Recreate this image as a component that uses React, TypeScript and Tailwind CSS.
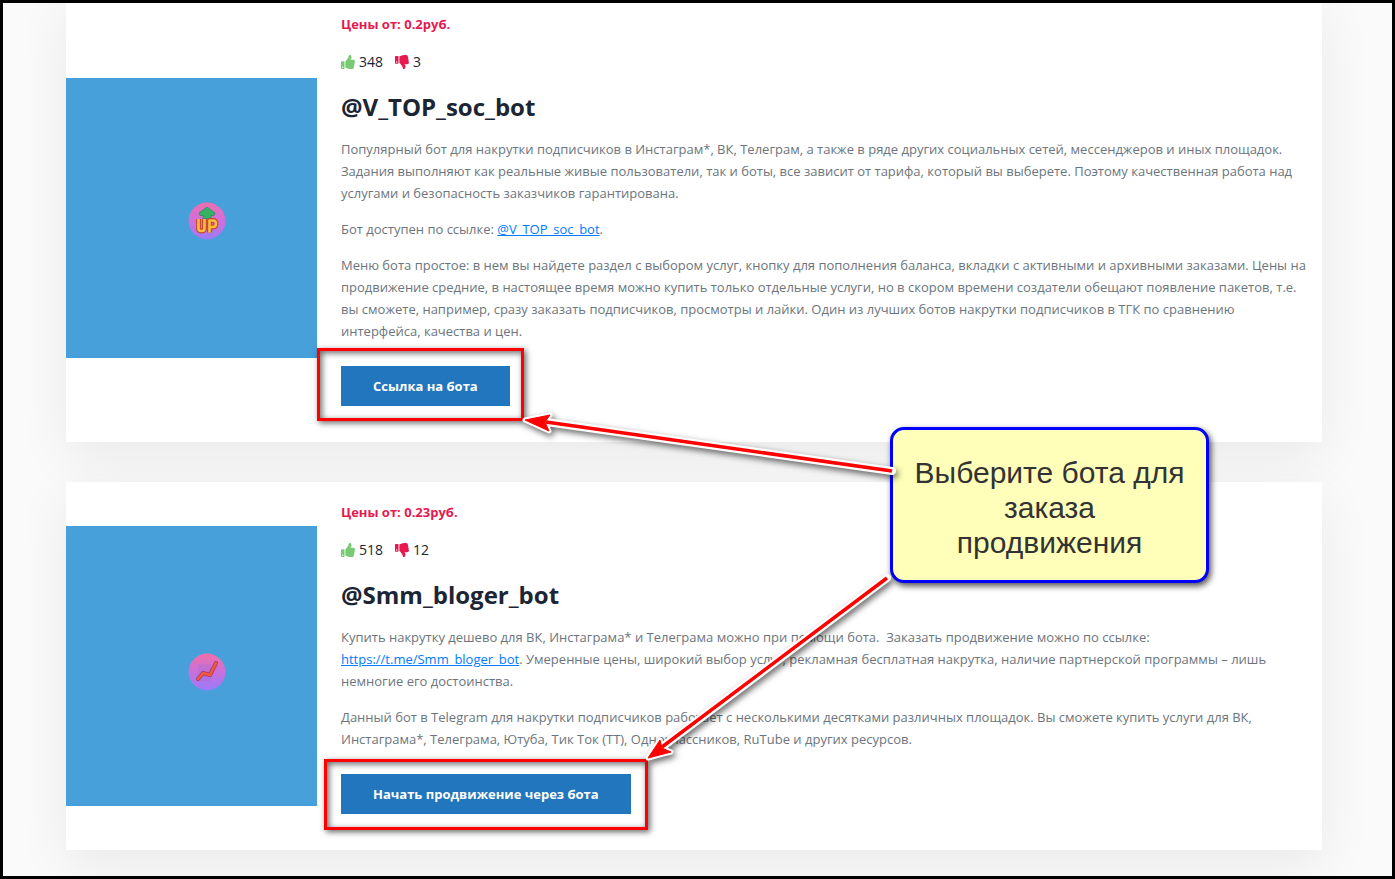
import React from "react";
import { FaThumbsDown, FaThumbsUp } from "react-icons/fa";

interface BotCardProps {
  price: string;
  likes: number;
  dislikes: number;
  name: string;
  action: string;
  logo: React.ReactNode;
  children: React.ReactNode;
}

const UpLogo = () => (
  <svg viewBox="0 0 38 38" className="mt-[6px] ml-[31px] size-[38px]" aria-hidden="true">
    <defs>
      <linearGradient id="up-bg" x1="0" y1="0" x2="0" y2="1">
        <stop offset="0" stopColor="#ee6fae" />
        <stop offset="0.5" stopColor="#cf6fdc" />
        <stop offset="1" stopColor="#9b7cf6" />
      </linearGradient>
    </defs>
    <circle cx="19" cy="19" r="18.5" fill="url(#up-bg)" />
    <path d="M19 5l8 6-1 2.500h-3v3h-8v-3h-3l-1-2.500z" fill="#36b260" stroke="#2a8a6a" strokeWidth="0.800" />
    <g fill="none" strokeLinejoin="round">
      <path d="M10.500 17v10q0 2 3 2t3-2v-10M21.500 30.500v-12h3.500q3 0 3 3.200t-3 3.300h-3" stroke="#c8452c" strokeWidth="4.800" />
      <path d="M10.500 17v10q0 2 3 2t3-2v-10M21.500 30.500v-12h3.500q3 0 3 3.200t-3 3.300h-3" stroke="#f9bd3f" strokeWidth="2.600" />
    </g>
  </svg>
);

const GrowthLogo = () => (
  <svg viewBox="0 0 38 38" className="mt-3 ml-[31px] size-[38px]" aria-hidden="true">
    <defs>
      <linearGradient id="growth-bg" x1="0" y1="0" x2="0" y2="1">
        <stop offset="0" stopColor="#f070a8" />
        <stop offset="0.5" stopColor="#c870dc" />
        <stop offset="1" stopColor="#9a7cfa" />
      </linearGradient>
    </defs>
    <circle cx="19" cy="19" r="18.5" fill="url(#growth-bg)" />
    <path d="M10 11h13v17H10z" fill="#a06ad0" opacity="0.3" />
    <path d="M10 26l5-6 7 2 6-12" fill="none" stroke="#a93a58" strokeWidth="4" strokeLinecap="round" strokeLinejoin="round" />
    <path d="M10 26l5-6 7 2 6-12" fill="none" stroke="#f2593d" strokeWidth="2.500" strokeLinecap="round" strokeLinejoin="round" />
  </svg>
);

const BotCard: React.FC<BotCardProps> = ({ price, likes, dislikes, name, action, logo, children }) => {
  return (
    <article className="flex items-center bg-white shadow-[0_15px_50px_rgba(0,0,0,0.07)]">
      <div className="flex h-[280px] w-[251px] shrink-0 items-center justify-center bg-[#47a0d9]">
        {logo}
      </div>
      <div className="min-w-0 flex-1 pt-5 pr-3 pb-9 pl-6">
        <p className="text-[13px] leading-5 font-bold text-[#e5194f]">Цены от: {price}</p>
        <div className="mt-4 flex items-center text-sm leading-6 text-[#1b2534]">
          <FaThumbsUp className="mr-1 size-[14px] text-[#79c973]" />
          {likes}
          <FaThumbsDown className="mr-1 ml-3 size-[14px] text-[#e5194f]" />
          {dislikes}
        </div>
        <h2 className="mt-[17px] text-2xl leading-8 font-bold text-[#1b2534]">{name}</h2>
        <div className="mt-[15px] space-y-[14px] text-[13px] leading-[22px] text-[#6c757d]">{children}</div>
        <button
          type="button"
          className="mt-6 h-10 bg-[#2176bd] px-8 text-[13px] leading-5 font-bold text-white"
        >
          {action}
        </button>
      </div>
    </article>
  );
};

const Annotations = () => (
  <>
    <div className="absolute top-[345px] left-[314px] h-[73px] w-[207px] border-3 border-[#ff0000] shadow-[2px_2px_6px_rgba(0,0,0,0.6),inset_2px_2px_6px_rgba(0,0,0,0.6)]" />
    <div className="absolute top-[756px] left-[321px] h-[71px] w-[324px] border-3 border-[#ff0000] shadow-[2px_2px_6px_rgba(0,0,0,0.6),inset_2px_2px_6px_rgba(0,0,0,0.6)]" />
    <div className="absolute top-[424px] left-[887px] flex h-[156px] w-[319px] items-center justify-center rounded-[14px] border-3 border-[#0000ff] bg-[#ffffb9] px-4 pt-1 text-center font-['Liberation_Sans',Arial,sans-serif] text-[30px] leading-[35px] text-[#333333] shadow-[2px_3px_6px_rgba(0,0,0,0.7)]">
      Выберите бота для заказа продвижения
    </div>
    <svg
      viewBox="0 0 1395 879"
      className="pointer-events-none absolute -top-[3px] -left-[3px] h-[879px] w-[1395px] max-w-none drop-shadow-[2px_3px_3px_rgba(0,0,0,0.6)]"
      aria-hidden="true"
    >
      <g stroke="#fff" fill="#fff" strokeLinecap="round" strokeLinejoin="round">
        <path d="M546 422L892 471M887 578L662 747" strokeWidth="8" />
        <path d="M525 420l25-5-5 7 4 9zM648 758l12-18 2 8 9 4z" strokeWidth="5" />
      </g>
      <g stroke="#f00" fill="#f00">
        <path d="M546 422L892 471M887 578L662 747" strokeWidth="3.5" />
        <path d="M525 420l25-5-5 7 4 9zM648 758l12-18 2 8 9 4z" strokeWidth="1" />
      </g>
    </svg>
  </>
);

const App: React.FC = () => {
  return (
    <div className="relative h-screen overflow-hidden border-3 border-black bg-[#fafafa] font-['Open_Sans',sans-serif]">
      <main className="-mt-[9px] flex flex-col gap-10 pr-[70px] pl-[63px]">
        <BotCard
          price="0.2руб."
          likes={348}
          dislikes={3}
          name="@V_TOP_soc_bot"
          action="Ссылка на бота"
          logo={<UpLogo />}
        >
          <p>
            Популярный бот для накрутки подписчиков в Инстаграм*, ВК, Телеграм, а также в ряде других
            социальных сетей, мессенджеров и иных площадок. Задания выполняют как реальные живые
            пользователи, так и боты, все зависит от тарифа, который вы выберете. Поэтому качественная
            работа над услугами и безопасность заказчиков гарантирована.
          </p>
          <p>
            Бот доступен по ссылке:{" "}
            <a href="https://t.me/V_TOP_soc_bot" className="text-[#007bff] underline">
              @V_TOP_soc_bot
            </a>
            .
          </p>
          <p>
            Меню бота простое: в нем вы найдете раздел с выбором услуг, кнопку для пополнения баланса,
            вкладки с активными и архивными заказами. Цены на продвижение средние, в настоящее время
            можно купить только отдельные услуги, но в скором времени создатели обещают появление
            пакетов, т.е. вы сможете, например, сразу заказать подписчиков, просмотры и лайки. Один из
            лучших ботов накрутки подписчиков в ТГК по сравнению интерфейса, качества и цен.
          </p>
        </BotCard>
        <BotCard
          price="0.23руб."
          likes={518}
          dislikes={12}
          name="@Smm_bloger_bot"
          action="Начать продвижение через бота"
          logo={<GrowthLogo />}
        >
          <p>
            Купить накрутку дешево для ВК, Инстаграма* и Телеграма можно при помощи бота.&nbsp; Заказать
            продвижение можно по ссылке:{" "}
            <a href="https://t.me/Smm_bloger_bot" className="text-[#007bff] underline">
              https://t.me/Smm_bloger_bot
            </a>
            . Умеренные цены, широкий выбор услуг, рекламная бесплатная накрутка, наличие партнерской
            программы – лишь немногие его достоинства.
          </p>
          <p>
            Данный бот в Telegram для накрутки подписчиков работает с несколькими десятками различных
            площадок. Вы сможете купить услуги для ВК, Инстаграма*, Телеграма, Ютуба, Тик Ток (ТТ),
            Одноклассников, RuTube и других ресурсов.
          </p>
        </BotCard>
      </main>
      <Annotations />
    </div>
  );
};

export default App;
